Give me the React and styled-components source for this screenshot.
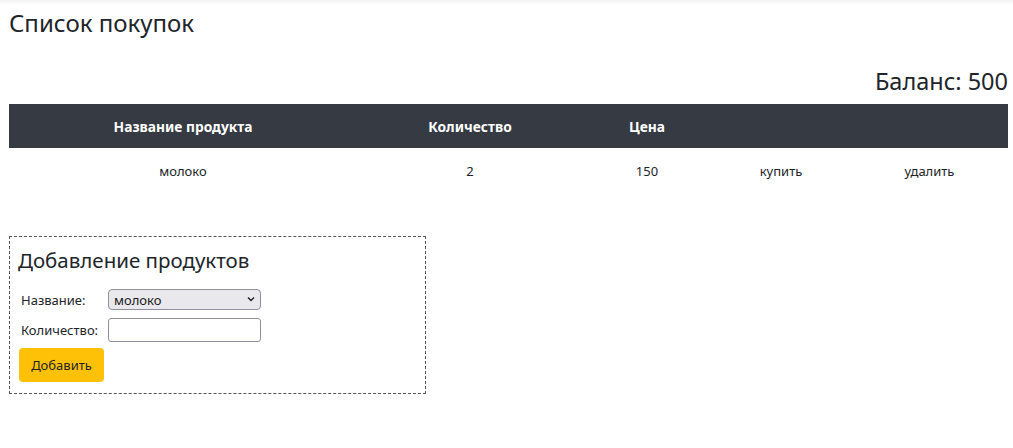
import React, { useState } from 'react';
import styled, { createGlobalStyle } from 'styled-components';

const GlobalStyle = createGlobalStyle`
  body {
    margin: 0;
    background: #fff;
    color: #212529;
    font-family: "Noto Sans", "Open Sans", sans-serif;
  }
  * { box-sizing: border-box; }
`;

const products = [
    { name: 'молоко', count: 2, price: 150 },
];

const App = () => {
    const [selected, setSelected] = useState('молоко');
    const [count, setCount] = useState('');

    return (
        <>
        <GlobalStyle />
        <TopShade />
        <Page>
            <Title>Список покупок</Title>
            <Balance>Баланс: 500</Balance>
            <Table>
                <colgroup>
                    <col style={{ width: 348 }} />
                    <col style={{ width: 226 }} />
                    <col style={{ width: 128 }} />
                    <col style={{ width: 140 }} />
                    <col style={{ width: 157 }} />
                </colgroup>
                <thead>
                    <HeadRow>
                        <HeadCell>Название продукта</HeadCell>
                        <HeadCell>Количество</HeadCell>
                        <HeadCell>Цена</HeadCell>
                        <HeadCell />
                        <HeadCell />
                    </HeadRow>
                </thead>
                <tbody>
                    {products.map((p) => (
                        <tr key={p.name}>
                            <Cell>{p.name}</Cell>
                            <Cell>{p.count}</Cell>
                            <Cell>{p.price}</Cell>
                            <Cell><ActionLink>купить</ActionLink></Cell>
                            <Cell><ActionLink>удалить</ActionLink></Cell>
                        </tr>
                    ))}
                </tbody>
            </Table>

            <AddBox>
                <AddHead>Добавление продуктов</AddHead>
                <FormGrid>
                    <FieldLabel>Название:</FieldLabel>
                    <SelectWrap>
                        <Select value={selected} onChange={(e) => setSelected(e.target.value)}>
                            <option>молоко</option>
                            <option>хлеб</option>
                            <option>сыр</option>
                        </Select>
                        <Chevron width="8" height="6" viewBox="0 0 8 6">
                            <path d="M1 1.5 L4 4.5 L7 1.5" fill="none" stroke="#222" strokeWidth="1.4" />
                        </Chevron>
                    </SelectWrap>
                    <FieldLabel>Количество:</FieldLabel>
                    <Input type="text" value={count} onChange={(e) => setCount(e.target.value)} />
                </FormGrid>
                <AddButton type="button">Добавить</AddButton>
            </AddBox>
        </Page>
        </>
    );
};

export default App;

const TopShade = styled.div`
    position: fixed;
    top: 0;
    left: 0;
    right: 0;
    height: 5px;
    background: linear-gradient(#f2f2f2, rgba(255, 255, 255, 0));
`;

const Page = styled.div`
    padding: 0 5px 0 9px;
`;

const Title = styled.h3`
    margin: 0;
    padding-top: 7px;
    font-size: 24px;
    font-weight: 400;
    line-height: 32px;
`;

const Balance = styled.h3`
    margin: 26px 0 0;
    text-align: right;
    font-size: 23.5px;
    font-weight: 400;
    line-height: 32px;
    height: 39px;
`;

const Table = styled.table`
    width: 100%;
    border-collapse: collapse;
    table-layout: fixed;
    font-size: 13px;
`;

const HeadRow = styled.tr`
    background: #363a42;
`;

const HeadCell = styled.th`
    height: 44px;
    padding: 0;
    color: #fff;
    font-size: 13.8px;
    font-weight: 700;
    text-align: center;
`;

const Cell = styled.td`
    height: 45px;
    padding: 0;
    text-align: center;
`;

const ActionLink = styled.span`
    cursor: pointer;
`;

const AddBox = styled.div`
    margin-top: 43px;
    width: 417px;
    height: 158px;
    border: 1px dashed #555;
    padding: 8px 0 0 8px;
`;

const AddHead = styled.h4`
    margin: 1px 0 15px;
    font-size: 20.5px;
    font-weight: 400;
    line-height: 28px;
`;

const FormGrid = styled.div`
    display: grid;
    grid-template-columns: 87px 153px;
    row-gap: 8px;
    align-items: center;
    margin-left: 3px;
    font-size: 13px;
`;

const FieldLabel = styled.label``;

const SelectWrap = styled.div`
    position: relative;
    width: 153px;
    height: 21px;
`;

const Select = styled.select`
    appearance: none;
    width: 100%;
    height: 100%;
    padding: 0 0 0 5px;
    border: 1px solid #8f8f9d;
    border-radius: 4px;
    background: #e9e8ed;
    color: #1b1b1b;
    font-family: inherit;
    font-size: 13px;
`;

const Chevron = styled.svg`
    position: absolute;
    right: 6px;
    top: 7px;
    pointer-events: none;
`;

const Input = styled.input`
    width: 153px;
    height: 24px;
    border: 1px solid #8f8f9d;
    border-radius: 3px;
    background: #fff;
`;

const AddButton = styled.button`
    margin: 6px 0 0 1px;
    width: 85px;
    height: 34px;
    border: none;
    border-radius: 4px;
    background: #ffc107;
    color: #212529;
    font-family: inherit;
    font-size: 13px;
    cursor: pointer;
`;
